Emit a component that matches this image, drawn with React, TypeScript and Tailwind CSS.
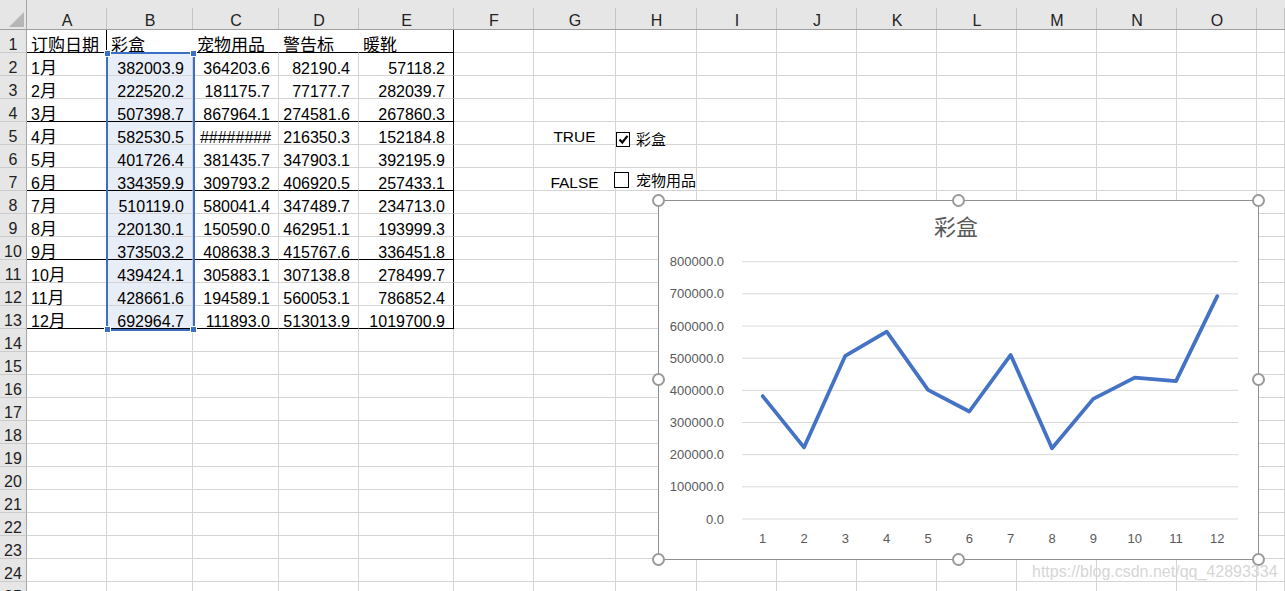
import React from "react";

const LETTERS = ["A", "B", "C", "D", "E", "F", "G", "H", "I", "J", "K", "L", "M", "N", "O", ""];

const TABLE: string[][] = [
  ["订购日期", "彩盒", "宠物用品", "警告标", "暖靴"],
  ["1月", "382003.9", "364203.6", "82190.4", "57118.2"],
  ["2月", "222520.2", "181175.7", "77177.7", "282039.7"],
  ["3月", "507398.7", "867964.1", "274581.6", "267860.3"],
  ["4月", "582530.5", "########", "216350.3", "152184.8"],
  ["5月", "401726.4", "381435.7", "347903.1", "392195.9"],
  ["6月", "334359.9", "309793.2", "406920.5", "257433.1"],
  ["7月", "510119.0", "580041.4", "347489.7", "234713.0"],
  ["8月", "220130.1", "150590.0", "462951.1", "193999.3"],
  ["9月", "373503.2", "408638.3", "415767.6", "336451.8"],
  ["10月", "439424.1", "305883.1", "307138.8", "278499.7"],
  ["11月", "428661.6", "194589.1", "560053.1", "786852.4"],
  ["12月", "692964.7", "111893.0", "513013.9", "1019700.9"],
];

const SERIES = TABLE.slice(1).map((r) => parseFloat(r[1]));

function Mixed({ s }: { s: string }) {
  const parts = s.split(/([\u4e00-\u9fff]+)/).filter(Boolean);
  return (
    <>
      {parts.map((p, i) =>
        /[\u4e00-\u9fff]/.test(p) ? (
          <span key={i} className="text-[17px] align-[2px]">
            {p}
          </span>
        ) : (
          <span key={i}>{p}</span>
        )
      )}
    </>
  );
}

function HeaderRow() {
  return (
    <>
      <div className="bg-[#e6e6e6] border-r border-b border-r-[#a6a6a6] border-b-[#9f9f9f] flex items-end justify-end pr-[2px] pb-[2px]">
        <svg width="15" height="15" viewBox="0 0 15 15">
          <polygon points="15,0 15,15 0,15" fill="#b6b6b6" />
        </svg>
      </div>
      {LETTERS.map((l, i) => (
        <div
          key={i}
          className="relative bg-[#e6e6e6] border-b border-b-[#9f9f9f] flex items-end justify-center pb-[2px] leading-[13px] text-[16px] text-[#222]"
        >
          {l}
          <span className="absolute right-0 top-[8px] bottom-0 w-px bg-[#c4c4c4]" />
        </div>
      ))}
    </>
  );
}

function DataCell({ r, c }: { r: number; c: number }) {
  const inTable = r <= 13 && c >= 1 && c <= 5;
  const bBlack = inTable && [1, 4, 7, 10, 13].includes(r);
  const rBlack = (c === 5 && r <= 13) || (r === 1 && c === 1);
  const rWhite = r === 1 && c >= 2 && c <= 4;
  const rCls = rBlack ? "border-r-black" : rWhite ? "border-r-white" : "border-r-[#d4d4d4]";
  const bCls = bBlack ? "border-b-black" : "border-b-[#d4d4d4]";
  const bg = c === 2 && r >= 2 && r <= 13 ? "bg-[#e8eef8]" : "bg-white";

  let text = "";
  let align = "justify-start pl-[4px]";
  let extra = "text-[16px] pb-0";
  if (inTable) {
    text = TABLE[r - 1][c - 1];
    if (r === 1 || c === 1) align = "justify-start pl-[4px]";
    else if (text.startsWith("#")) align = "justify-center";
    else align = "justify-end pr-[8px]";
  } else if (c === 7 && r === 5) {
    text = "TRUE";
    align = "justify-center";
    extra = "text-[15.5px] pb-[1px] text-[#1e1e1e]";
  } else if (c === 7 && r === 7) {
    text = "FALSE";
    align = "justify-center";
    extra = "text-[15.5px] pb-[1px] text-[#1e1e1e]";
  }

  return (
    <div
      className={`flex items-end leading-[13px] border-r border-b whitespace-nowrap text-black ${rCls} ${bCls} ${bg} ${align} ${extra}`}
    >
      {text ? <Mixed s={text} /> : null}
    </div>
  );
}

function Chart() {
  const x0 = 83;
  const x1 = 579;
  const yZero = 318;
  const scale = 257.3 / 800000;
  const step = (x1 - x0) / 12;
  const pts = SERIES.map((v, i) => `${(x0 + (i + 0.5) * step).toFixed(1)},${(yZero - v * scale).toFixed(1)}`).join(" ");
  const ticks = [0, 1, 2, 3, 4, 5, 6, 7, 8];
  return (
    <div className="w-[601px] h-[360px] border border-[#8f8f8f] bg-white">
      <svg width="599" height="358" viewBox="0 0 599 358" className="block">
        <text
          x="297"
          y="34"
          textAnchor="middle"
          fontSize="22"
          fill="#595959"
          fontFamily="'Noto Sans CJK SC', sans-serif"
        >
          彩盒
        </text>
        {ticks.map((k) => {
          const y = yZero - k * 100000 * scale;
          return (
            <g key={k}>
              <line x1={x0} x2={x1} y1={y} y2={y} stroke="#d9d9d9" strokeWidth="1" />
              <text
                x="65"
                y={y + 4.6}
                textAnchor="end"
                fontSize="13"
                fill="#595959"
                fontFamily="'Liberation Sans', sans-serif"
              >
                {(k * 100000).toFixed(1)}
              </text>
            </g>
          );
        })}
        {SERIES.map((_, i) => (
          <text
            key={i}
            x={x0 + (i + 0.5) * step}
            y="341.5"
            textAnchor="middle"
            fontSize="13"
            fill="#595959"
            fontFamily="'Liberation Sans', sans-serif"
          >
            {i + 1}
          </text>
        ))}
        <polyline
          points={pts}
          fill="none"
          stroke="#4472c4"
          strokeWidth="3.75"
          strokeLinejoin="round"
          strokeLinecap="round"
        />
      </svg>
    </div>
  );
}

const HANDLE = "absolute w-[13px] h-[13px] rounded-full border-2 border-[#9a9a9a] bg-white";
const SEL_HANDLE = "absolute w-[7px] h-[7px] bg-[#3c6ec6] border border-white";

export default function App() {
  const rows = Array.from({ length: 25 }, (_, i) => i + 1);
  const cols = Array.from({ length: 16 }, (_, i) => i + 1);
  return (
    <div className="relative w-[1285px] h-[591px] overflow-hidden bg-white font-['Liberation_Sans','Noto_Sans_CJK_SC',sans-serif]">
      <div className="grid grid-cols-[27px_80px_86px_86px_80px_95px_80px_82px_81px_80px_80px_80px_80px_80px_80px_80px_28px] grid-rows-[30px_repeat(25,23px)]">
        <HeaderRow />
        {rows.map((r) => (
          <React.Fragment key={r}>
            <div className="bg-[#e6e6e6] border-r border-b border-r-[#a6a6a6] border-b-[#cbcbcb] flex items-end justify-center pb-[1px] leading-[13px] text-[16px] text-[#222]">
              {r}
            </div>
            {cols.map((c) => (
              <DataCell key={c} r={r} c={c} />
            ))}
          </React.Fragment>
        ))}
      </div>

      {/* selection of B2:B13 */}
      <div className="absolute left-[106px] top-[52px] w-[89px] h-[279px] border-2 border-[#3c6ec6]">
        <div className={`${SEL_HANDLE} -left-[4px] -top-[4px]`} />
        <div className={`${SEL_HANDLE} -right-[4px] -top-[4px]`} />
        <div className={`${SEL_HANDLE} -left-[4px] -bottom-[4px]`} />
        <div className={`${SEL_HANDLE} -right-[4px] -bottom-[4px]`} />
      </div>

      {/* form checkboxes floating over the sheet */}
      <div className="absolute left-[614px] top-[131px] flex flex-col gap-[25px]">
        <div className="flex items-center pl-[2px]">
          <div className="w-[14px] h-[15px] border-[1.5px] border-black bg-white flex items-center justify-center">
            <svg width="11" height="11" viewBox="0 0 11 11">
              <polyline points="1.5,5.5 4.3,8.5 9.5,1.8" fill="none" stroke="#000" strokeWidth="2.2" />
            </svg>
          </div>
          <span className="ml-[6px] text-[15px] leading-[16px] text-black font-['Noto_Sans_CJK_SC',sans-serif]">彩盒</span>
        </div>
        <div className="flex items-center">
          <div className="w-[15px] h-[16px] border border-black bg-white" />
          <span className="ml-[7px] text-[15px] leading-[16px] text-black font-['Noto_Sans_CJK_SC',sans-serif]">宠物用品</span>
        </div>
      </div>

      {/* selected chart with its handles */}
      <div className="absolute left-[652px] top-[194px] p-[6px]">
        <Chart />
        <div className={`${HANDLE} left-0 top-0`} />
        <div className={`${HANDLE} left-[300px] top-0`} />
        <div className={`${HANDLE} right-0 top-0`} />
        <div className={`${HANDLE} left-0 top-[179px]`} />
        <div className={`${HANDLE} right-0 top-[179px]`} />
        <div className={`${HANDLE} left-0 bottom-0`} />
        <div className={`${HANDLE} left-[300px] bottom-0`} />
        <div className={`${HANDLE} right-0 bottom-0`} />
      </div>

      <div className="absolute left-[1032px] top-[562px] text-[16px] leading-[19px] text-[#d6d6d6] whitespace-nowrap">
        https://blog.csdn.net/qq_42893334
      </div>
    </div>
  );
}
